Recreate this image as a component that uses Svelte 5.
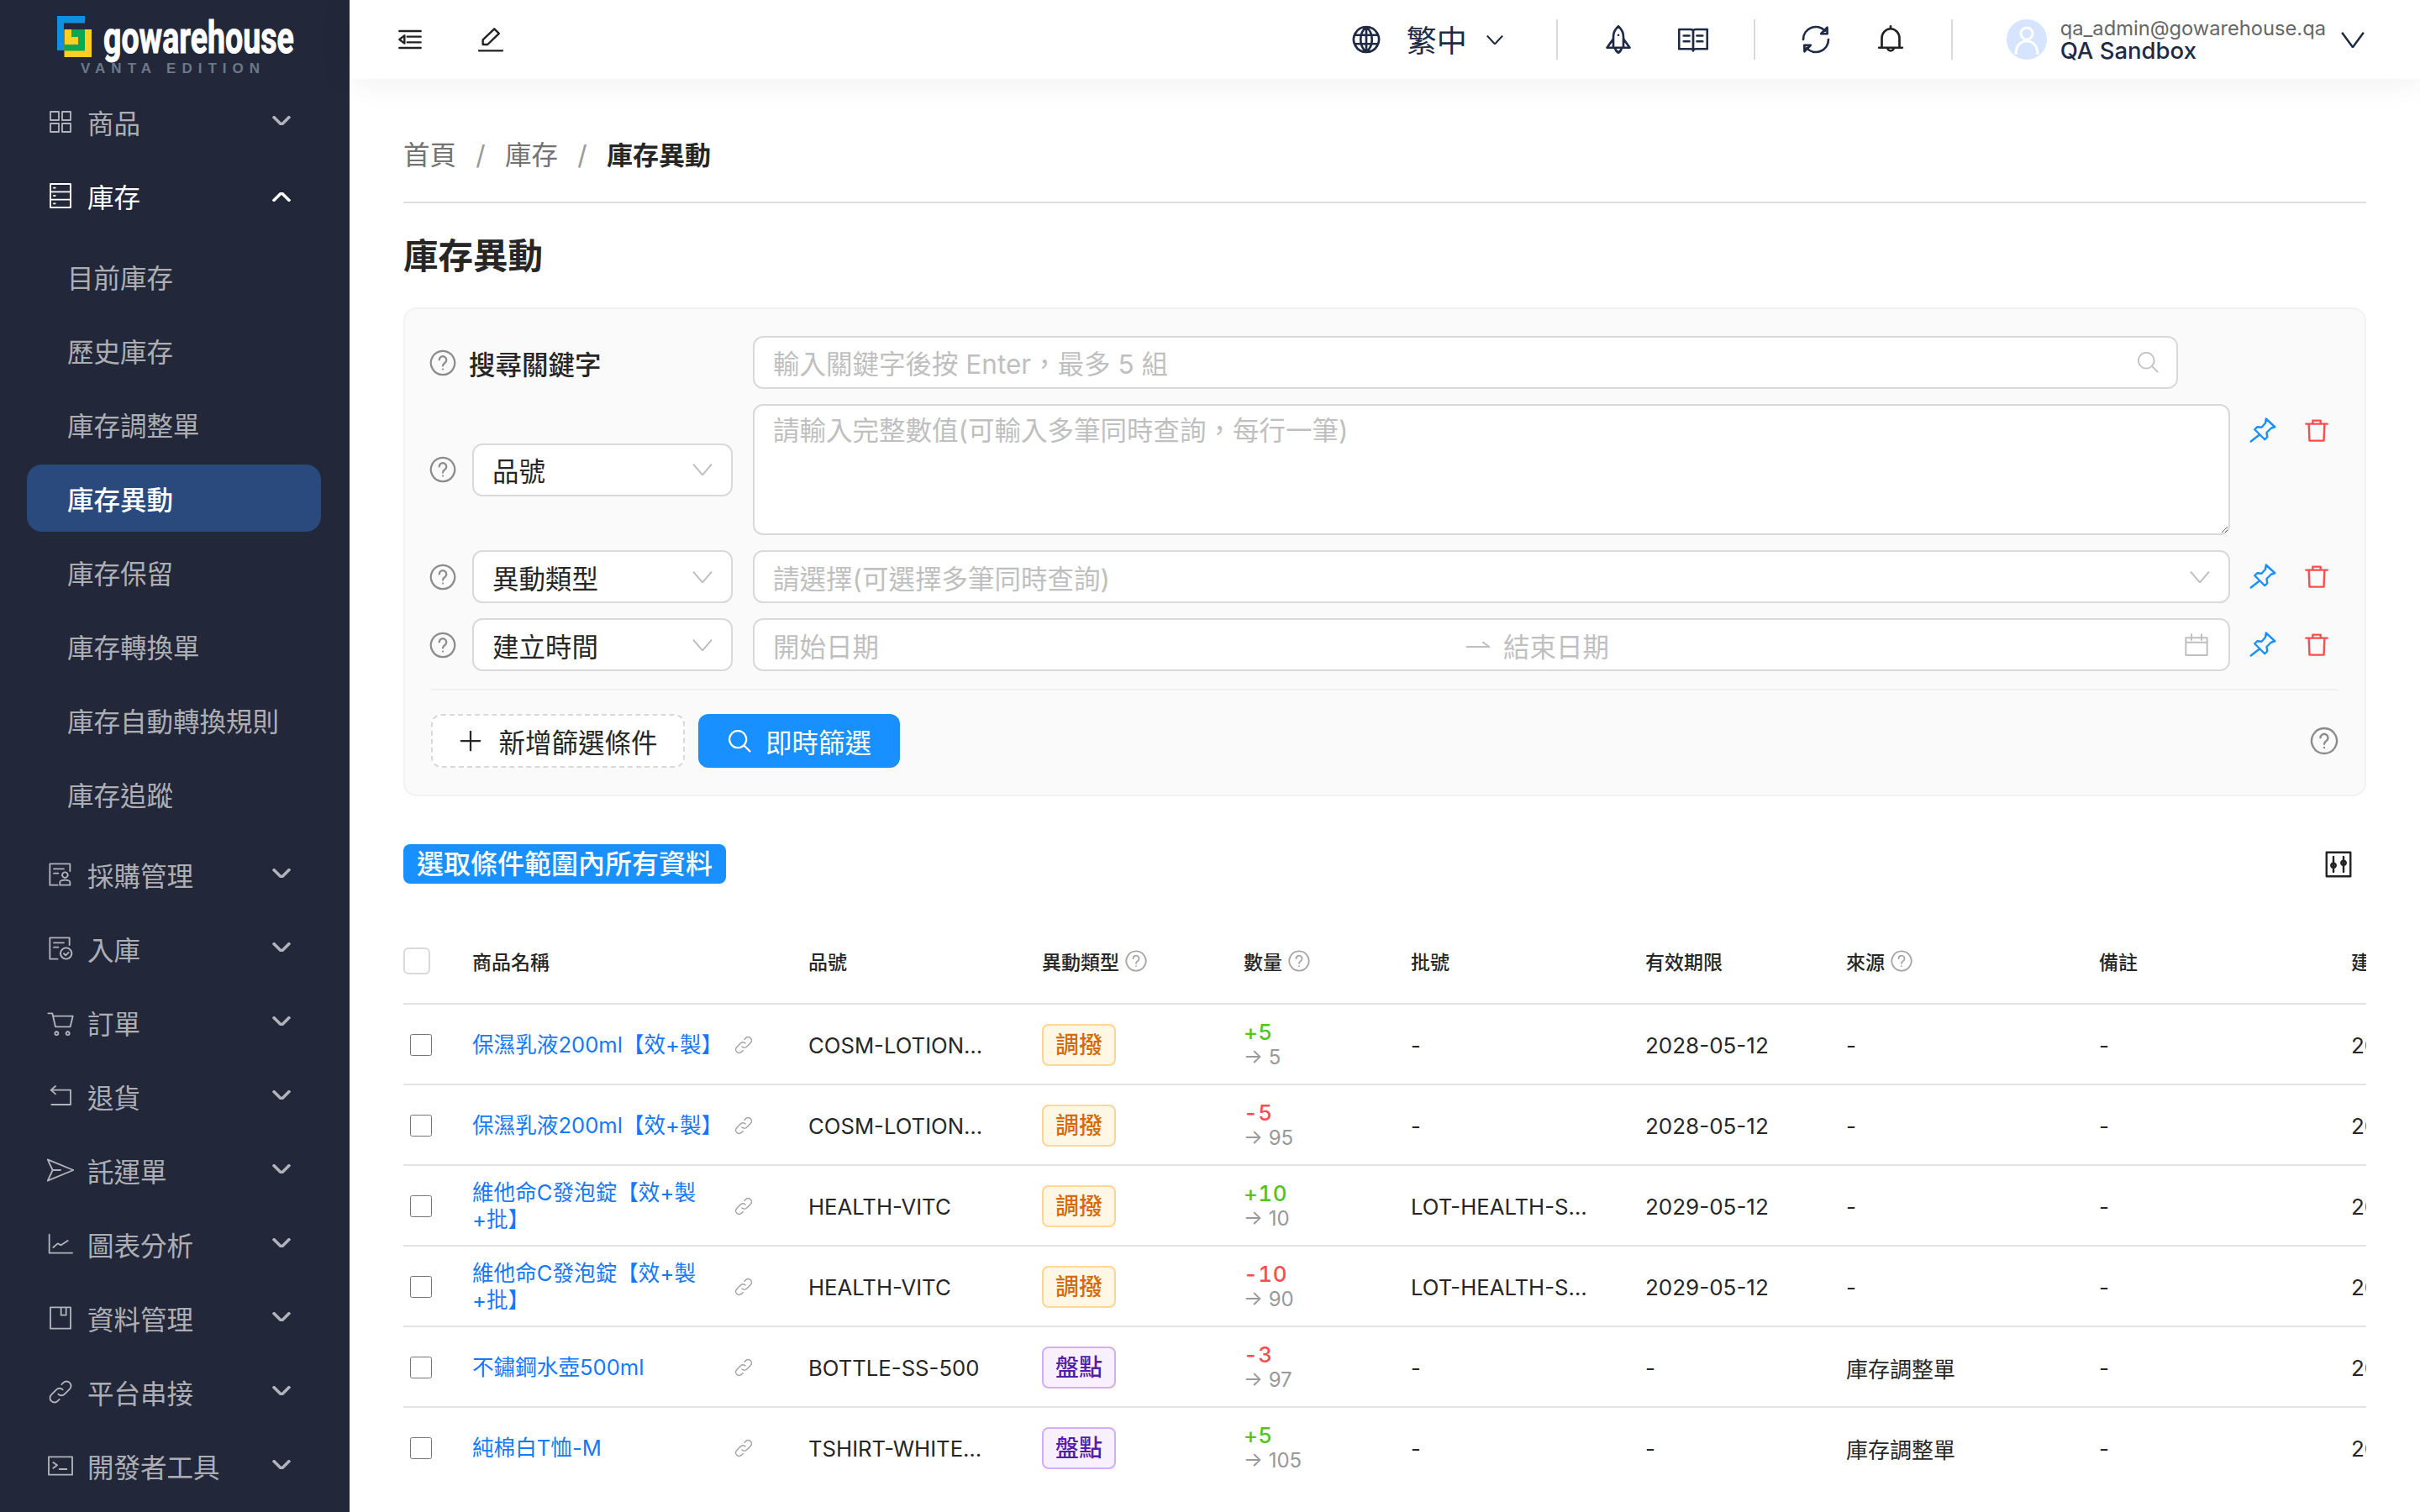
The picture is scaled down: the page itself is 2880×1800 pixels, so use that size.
<script>
    const icons = {
        grid: 'M3 3h7.500v7.500H3zM13.500 3H21v7.500h-7.500zM3 13.500h7.500V21H3zM13.500 13.500H21V21h-7.500z',
        database: 'M3 1.500h18v21H3zM3 8.500h18M3 15.500h18M6 5h1.200M6 12h1.200M6 19h1.200',
        purchase: 'M20.500 9V2.500H2.500v19h7M6 7h9M6 11h4M16 10a2.500 2.500 0 1 0 .01 0M11.500 21.500v-2.500c0-1.200 2-2 4.500-2s4.500.8 4.500 2v2.500z',
        inbound: 'M20 9V2.500H2.500v19h7M6 7h9M6 11h4M17 11.500a5 5 0 1 0 .01 0M15 16.700l1.600 1.600 2.600-2.600',
        cart: 'M1 4h3.700l2.800 12h13.200L23 6.500H5.300M8.500 20.400a1.500 1.500 0 1 0 .01 0M18.500 20.400a1.500 1.500 0 1 0 .01 0',
        back: 'M3.500 6.500H21v13H4M7.500 3L3.500 6.500 7.500 10',
        send: 'M0.500 2.500l23 9.500-23 9.500 4.500-9.500zM5 12h7',
        chart: 'M2 3.500v16.500h20.500M5.500 15l4-3.500 3 1.500 6-4',
        box: 'M3 2.500h18v19H3zM12.500 2.500v7h4.500v-7',
        link: 'M10 14a4 4 0 0 0 5.700 0l4.500-4.500a4 4 0 0 0-5.700-5.700L13 5.300M14 10a4 4 0 0 0-5.700 0l-4.500 4.500a4 4 0 0 0 5.700 5.700L11 18.700',
        terminal: 'M1.500 4h21v16h-21zM5.500 9l3.500 2.500L5.500 14M11 15h6.500',
        globe: 'M12 2a10 10 0 1 0 .01 0M12 2c-3 2.500-4.500 6-4.500 10s1.500 7.500 4.500 10c3-2.500 4.500-6 4.500-10S15 4.500 12 2zM12 2v20M2.800 8.500h18.400M2.800 15.500h18.400',
        rocket: 'M12 1.500c2.800 2.500 4 5 4 8.500v8.500H8V10c0-3.500 1.200-6 4-8.500zM8 11.500L3 18.500h18l-5-7M9.500 18.500c0 2 1.200 3.200 2.500 4 1.300-.8 2.500-2 2.500-4M12 8.500h.01',
        book: 'M0.800 4h9.200c1 0 2 .6 2 1.600 0-1 1-1.600 2-1.600h9.200v15.500H14c-1 0-2 .4-2 1.500 0-1.100-1-1.500-2-1.500H0.800zM12 5.600V21M4.500 9h4.500M4.500 13.500h4.500M15 9h4.500M15 13.500h4.500',
        sync: 'M22 12a10 10 0 0 1-17.300 6.800M2 12A10 10 0 0 1 19.300 5.200M21 2.500l.1 5-5-.1zM3 21.500l-.1-5 5 .1z',
        bell: 'M12 1.500v2M5 18.500V11c0-4 3-7.500 7-7.500s7 3.500 7 7.500v7.500M2.800 18.500h18.400M9.500 18.500a2.500 2.500 0 0 0 5 0',
        outdent: 'M2.500 4.500h19M9.500 9.500h12M9.500 14.500h12M2.500 19.500h19M7 8.500v7L2.500 12z',
        pen: 'M5 16.500v-4.200L15.200 2.500l4.200 4.200L9.200 16.500zM1.500 22h21',
        pin: 'M14.500 3L21.500 9.500 18.500 10.500 15 14 15.500 17.500 13.500 19.500 5.500 11.500 7.500 9.500 11 9.800 14 6.500zM9.500 15.500L2.500 21',
        trash: 'M2.500 6.500h19M5 6.500l.6 15h12.800l.6-15M8.500 6.500V3.500h7v3',
        calendar: 'M2.500 5.500h19v15.500h-19zM7.500 2.500v5M16.500 2.500v5M2.500 9.500h19',
        search: 'M10.500 2.500a8 8 0 1 0 .01 0M16.200 16.200L22 22',
        plus: 'M12 3v18M3 12h18',
        swap: 'M2 13.500h20l-5.500-4',
        sliders: 'M2.500 2.500h19v19h-19zM8 6v12M16 6v12M8 11a1.800 1.800 0 1 0 .01 0M16 9a1.800 1.800 0 1 0 .01 0',
        help: 'M12 2a10 10 0 1 0 .01 0M9 9.500a3 3 0 1 1 4.700 2.500c-1 .7-1.700 1.300-1.700 2.500M12 17.300h.01'
    };

    const topMenu = [
        { label: '採購管理', icon: 'purchase' },
        { label: '入庫', icon: 'inbound' },
        { label: '訂單', icon: 'cart' },
        { label: '退貨', icon: 'back' },
        { label: '託運單', icon: 'send' },
        { label: '圖表分析', icon: 'chart' },
        { label: '資料管理', icon: 'box' },
        { label: '平台串接', icon: 'link' },
        { label: '開發者工具', icon: 'terminal' }
    ];

    const stockMenu = ['目前庫存', '歷史庫存', '庫存調整單', '庫存異動', '庫存保留', '庫存轉換單', '庫存自動轉換規則', '庫存追蹤'];

    const columns = [
        { label: '' },
        { label: '商品名稱' },
        { label: '品號' },
        { label: '異動類型', help: true },
        { label: '數量', help: true },
        { label: '批號' },
        { label: '有效期限' },
        { label: '來源', help: true },
        { label: '備註' },
        { label: '建立時間' }
    ];

    const rows = [
        { name: '保濕乳液200ml【效+製】', sku: 'COSM-LOTION-200ML', type: '調撥', qty: '+5', after: 5, lot: '-', exp: '2028-05-12', source: '-' },
        { name: '保濕乳液200ml【效+製】', sku: 'COSM-LOTION-200ML', type: '調撥', qty: '-5', after: 95, lot: '-', exp: '2028-05-12', source: '-' },
        { name: '維他命C發泡錠【效+製+批】', sku: 'HEALTH-VITC', type: '調撥', qty: '+10', after: 10, lot: 'LOT-HEALTH-SEED-01', exp: '2029-05-12', source: '-' },
        { name: '維他命C發泡錠【效+製+批】', sku: 'HEALTH-VITC', type: '調撥', qty: '-10', after: 90, lot: 'LOT-HEALTH-SEED-01', exp: '2029-05-12', source: '-' },
        { name: '不鏽鋼水壺500ml', sku: 'BOTTLE-SS-500', type: '盤點', qty: '-3', after: 97, lot: '-', exp: '-', source: '庫存調整單' },
        { name: '純棉白T恤-M', sku: 'TSHIRT-WHITE-M', type: '盤點', qty: '+5', after: 105, lot: '-', exp: '-', source: '庫存調整單' }
    ];
</script>

{#snippet icon(name, cls)}
    <svg class="icon {cls}" viewBox="0 0 24 24" fill="none" stroke="currentColor" stroke-linecap="round" stroke-linejoin="round" aria-hidden="true"><path d={icons[name]} /></svg>
{/snippet}

{#snippet chevron(cls, up)}
    <svg class="chev {cls}" viewBox="0 0 24 12" preserveAspectRatio="none" fill="none" stroke="currentColor" aria-hidden="true"><path vector-effect="non-scaling-stroke" d={up ? 'M1 11.500L12 .5l11 11' : 'M1 .5l11 11L23 .5'} /></svg>
{/snippet}

{#snippet rowActions()}
    <div class="row-actions">
        {@render icon('pin', 'pin')}
        {@render icon('trash', 'trash')}
    </div>
{/snippet}

{#snippet fieldSelect(label)}
    <div class="field-left">
        {@render icon('help', 'help')}
        <div class="select">
            <span>{label}</span>
            {@render chevron('select-chev')}
        </div>
    </div>
{/snippet}

<div class="app">
    <aside class="sidebar">
        <div class="brand">
            <svg class="brand-mark" viewBox="0 0 41 49" aria-hidden="true">
                <path fill="#0e8fe0" d="M0 0H33V8.500H8V41H0Z" />
                <path fill="#ffcf25" d="M8.500 16H41V49H8.500Z" />
                <path fill="#0ca851" d="M17 16H33V41.500H8.500V34H25V25H17Z" />
            </svg>
            <div class="brand-text">
                <div class="brand-name">gowarehouse</div>
                <div class="brand-edition">VANTA EDITION</div>
            </div>
        </div>

        <nav class="menu">
            <div class="menu-item">
                {@render icon('grid', 'menu-icon')}
                <span>商品</span>
                {@render chevron('menu-chev')}
            </div>
            <div class="menu-item open">
                {@render icon('database', 'menu-icon')}
                <span>庫存</span>
                {@render chevron('menu-chev up', true)}
            </div>
            <div class="submenu">
                {#each stockMenu as item}
                    <div class="menu-item sub" class:active={item === '庫存異動'}>{item}</div>
                {/each}
            </div>
            {#each topMenu as item}
                <div class="menu-item">
                    {@render icon(item.icon, 'menu-icon')}
                    <span>{item.label}</span>
                    {@render chevron('menu-chev')}
                </div>
            {/each}
        </nav>
    </aside>

    <div class="content">
        <header class="topbar">
            <div class="tools">
                {@render icon('outdent', 'tool')}
                {@render icon('pen', 'tool')}
            </div>
            <div class="top-right">
                {@render icon('globe', 'top-icon')}
                <span class="lang">繁中</span>
                {@render chevron('lang-chev')}
                <i class="top-divider"></i>
                <div class="top-group">
                    {@render icon('rocket', 'top-icon')}
                    {@render icon('book', 'top-icon')}
                </div>
                <i class="top-divider"></i>
                <div class="top-group">
                    {@render icon('sync', 'top-icon')}
                    {@render icon('bell', 'top-icon bell')}
                </div>
                <i class="top-divider"></i>
                <div class="user">
                    <svg class="avatar" viewBox="0 0 48 48" fill="none" stroke="#fff" stroke-width="3" aria-hidden="true">
                        <circle cx="24" cy="24" r="24" fill="#d6e4ff" stroke="none" />
                        <circle cx="24" cy="17" r="7" />
                        <path d="M11 42c0-10 5-16 13-16s13 6 13 16" />
                    </svg>
                    <div class="user-text">
                        <div class="user-mail">qa_admin@gowarehouse.qa</div>
                        <div class="user-name">QA Sandbox</div>
                    </div>
                    {@render chevron('user-chev')}
                </div>
            </div>
        </header>

        <main class="page">
            <div class="crumbs">
                <span>首頁</span><span class="slash">/</span><span>庫存</span><span class="slash">/</span><span class="current">庫存異動</span>
            </div>
            <h1>庫存異動</h1>

            <section class="filters">
                <div class="filter-row">
                    <div class="field-left">
                        {@render icon('help', 'help')}
                        <span class="field-label">搜尋關鍵字</span>
                    </div>
                    <div class="keyword">
                        <input placeholder="輸入關鍵字後按 Enter，最多 5 組" readonly />
                        {@render icon('search', 'input-icon')}
                    </div>
                </div>
                <div class="filter-row">
                    {@render fieldSelect('品號')}
                    <textarea placeholder="請輸入完整數值(可輸入多筆同時查詢，每行一筆)" readonly></textarea>
                    {@render rowActions()}
                </div>
                <div class="filter-row">
                    {@render fieldSelect('異動類型')}
                    <div class="box placeholder">
                        <span>請選擇(可選擇多筆同時查詢)</span>
                        {@render chevron('select-chev')}
                    </div>
                    {@render rowActions()}
                </div>
                <div class="filter-row">
                    {@render fieldSelect('建立時間')}
                    <div class="box placeholder">
                        <span class="date">開始日期</span>
                        <span class="date-sep">{@render icon('swap', 'swap')}</span>
                        <span class="date">結束日期</span>
                        {@render icon('calendar', 'input-icon')}
                    </div>
                    {@render rowActions()}
                </div>
                <div class="filter-footer">
                    <button class="btn-add">{@render icon('plus', 'btn-icon')}新增篩選條件</button>
                    <button class="btn-search">{@render icon('search', 'btn-icon')}即時篩選</button>
                    {@render icon('help', 'help footer-help')}
                </div>
            </section>

            <div class="table-tools">
                <span class="select-all">選取條件範圍內所有資料</span>
                {@render icon('sliders', 'sliders')}
            </div>

            <div class="table-wrap">
                <div class="table-row table-head">
                    {#each columns as col, i}
                        <div class="cell">
                            {#if i === 0}
                                <span class="head-check"></span>
                            {:else}
                                {col.label}
                                {#if col.help}{@render icon('help', 'head-help')}{/if}
                            {/if}
                        </div>
                    {/each}
                </div>
                {#each rows as row}
                    <div class="table-row">
                        <div class="cell"><input class="row-check" type="checkbox" /></div>
                        <div class="cell name-cell">
                            <span class="name">{row.name}</span>
                            {@render icon('link', 'name-link')}
                        </div>
                        <div class="cell"><span class="clip">{row.sku}</span></div>
                        <div class="cell">
                            <span class="tag" class:purple={row.type === '盤點'}>{row.type}</span>
                        </div>
                        <div class="cell qty">
                            <span class:plus={row.qty[0] === '+'} class:minus={row.qty[0] === '-'}>{row.qty}</span>
                            <span class="after">→ {row.after}</span>
                        </div>
                        <div class="cell"><span class="clip">{row.lot}</span></div>
                        <div class="cell">{row.exp}</div>
                        <div class="cell">{row.source}</div>
                        <div class="cell">-</div>
                        <div class="cell">2026-03-18</div>
                    </div>
                {/each}
            </div>
        </main>
    </div>
</div>

<style>
    :global(body) {
        margin: 0;
    }

    .app {
        display: flex;
        height: 1800px;
        overflow: hidden;
        background: #fff;
        color: #262626;
        font-family: Inter, 'Noto Sans CJK TC', sans-serif;
        font-size: 31.500px;
    }

    .icon {
        flex: none;
        stroke-width: 1.6;
    }

    .chev {
        flex: none;
    }

    /* sidebar */
    .sidebar {
        flex: none;
        width: 416px;
        background: #222839;
        color: rgba(255, 255, 255, 0.65);
    }

    .brand {
        display: flex;
        align-items: flex-start;
        gap: 14px;
        height: 105px;
        padding: 19px 0 0 68px;
        box-sizing: border-box;
    }

    .brand-mark {
        flex: none;
        width: 41px;
        height: 49px;
    }

    .brand-text {
        width: 229px;
        padding-top: 2px;
    }

    .brand-name {
        font-family: Roboto, sans-serif;
        font-weight: 700;
        font-size: 54px;
        line-height: 48px;
        color: #fff;
        white-space: nowrap;
        -webkit-text-stroke: 1px #fff;
        transform: scaleX(0.695);
        transform-origin: left;
    }

    .brand-edition {
        margin: 4px 0 0 -27px;
        font-size: 17px;
        line-height: 18px;
        font-family: 'Liberation Sans', sans-serif;
        font-weight: 700;
        letter-spacing: 7px;
        color: #6d7889;
        white-space: nowrap;
    }

    .menu-item {
        display: flex;
        align-items: center;
        gap: 16px;
        height: 80px;
        margin: 0 34px 8px 32px;
        padding: 0 36px 0 24px;
        border-radius: 18px;
    }

    .menu-item > span {
        flex: 1;
    }

    .menu-item.open {
        color: #fff;
    }

    .menu-item.sub {
        padding-left: 48px;
    }

    .menu-item.active {
        background: #2a4a7d;
        color: #fff;
        font-weight: 500;
    }

    .submenu {
        margin: 16px 0 16px;
    }

    .menu-item :global(.menu-icon) {
        width: 32px;
        height: 32px;
        stroke-width: 1.400;
    }

    .menu-item :global(.menu-chev) {
        width: 22px;
        height: 11px;
        margin-top: -4px;
        stroke-width: 3.500;
    }

    .menu-item :global(.menu-chev.up) {
        margin-top: 2px;
    }

    /* topbar */
    .content {
        flex: 1;
        min-width: 0;
    }

    .topbar {
        position: relative;
        display: flex;
        align-items: center;
        height: 94px;
        padding: 0 66px 0 56px;
        background: #fff;
        box-shadow: 0 2px 40px rgba(0, 0, 0, 0.07);
    }

    .tools {
        display: flex;
        gap: 64px;
        color: #222;
    }

    .tools :global(.tool) {
        width: 32px;
        height: 32px;
        stroke-width: 1.800;
    }

    .top-right {
        display: flex;
        align-items: center;
        margin-left: auto;
        color: #1f2a44;
    }

    .top-right :global(.top-icon) {
        width: 36px;
        height: 36px;
        stroke-width: 1.800;
    }

    .top-right :global(.bell) {
        color: #222;
    }

    .lang {
        margin: -3px 0 0 30px;
        font-size: 36px;
    }

    .top-right :global(.lang-chev) {
        width: 20px;
        height: 11px;
        margin-left: 23px;
        stroke-width: 2;
    }

    .top-divider {
        width: 2px;
        height: 48px;
        background: #d9d9d9;
    }

    .top-divider:first-of-type {
        margin-left: 63px;
    }

    .top-group {
        display: flex;
        gap: 53px;
        padding: 0 54px;
    }

    .user {
        display: flex;
        align-items: center;
        padding-left: 64px;
    }

    .avatar {
        width: 48px;
        height: 48px;
    }

    .user-text {
        margin-left: 16px;
        line-height: 27px;
    }

    .user-mail {
        font-size: 23.700px;
        color: #666;
    }

    .user-name {
        font-size: 27.500px;
        font-weight: 500;
    }

    .user :global(.user-chev) {
        width: 28px;
        height: 19px;
        margin-left: 18px;
        stroke-width: 2.500;
    }

    /* page */
    .page {
        padding: 68px 64px 0;
    }

    .crumbs {
        display: flex;
        line-height: 46px;
        padding-bottom: 32px;
        border-bottom: 2px solid #dedede;
        color: #737373;
    }

    .slash {
        width: 58px;
        text-align: center;
        color: #999;
    }

    .current {
        font-size: 31px;
        font-weight: 600;
        color: #262626;
    }

    h1 {
        margin: 36px 0 34px;
        font-size: 41.500px;
        line-height: 54px;
        font-weight: 700;
        color: #262626;
    }

    /* filters */
    .filters {
        box-sizing: border-box;
        height: 582px;
        padding: 32px 32px 0 31px;
        background: #fafafa;
        border: 2px solid #f2f2f2;
        border-radius: 16px;
    }

    .filter-row {
        display: flex;
        align-items: center;
        margin-bottom: 18px;
    }

    .field-left {
        flex: none;
        display: flex;
        align-items: center;
        gap: 18px;
        width: 359px;
        margin-right: 24px;
    }

    .field-left :global(.help) {
        width: 34px;
        height: 34px;
        margin-left: -3px;
    }

    :global(.help) {
        color: #8c8c8c;
    }

    .field-label {
        margin-left: -4px;
        font-weight: 500;
    }

    .select,
    .box,
    input,
    textarea {
        box-sizing: border-box;
        height: 63px;
        background: #fff;
        border: 2px solid #d9d9d9;
        border-radius: 12px;
        font: inherit;
        color: inherit;
    }

    input::placeholder,
    textarea::placeholder {
        color: #bfbfbf;
    }

    .select {
        flex: 1;
        display: flex;
        align-items: center;
        justify-content: space-between;
        padding: 0 22px;
    }

    .select :global(.select-chev),
    .box :global(.select-chev) {
        width: 24px;
        height: 14px;
        stroke-width: 2;
        color: #bfbfbf;
    }

    .keyword {
        position: relative;
        width: 1696px;
    }

    .keyword input {
        width: 100%;
        padding: 3px 64px 0 22px;
        outline: none;
    }

    .keyword :global(.input-icon) {
        position: absolute;
        top: 17px;
        right: 22px;
        width: 28px;
        height: 28px;
    }

    .filter-row :global(.input-icon) {
        color: #bfbfbf;
        stroke-width: 1.500;
    }

    textarea {
        flex: 1;
        height: 156px;
        padding: 14px 22px;
        line-height: 32px;
        outline: none;
        resize: vertical;
    }

    .box {
        flex: 1;
        display: flex;
        align-items: center;
        justify-content: space-between;
        padding: 0 22px;
    }

    .placeholder {
        color: #bfbfbf;
    }

    .box :global(.input-icon) {
        width: 32px;
        height: 32px;
    }

    .date {
        flex: 1;
    }

    .date-sep {
        flex: none;
        display: flex;
        justify-content: center;
        width: 60px;
    }

    .date-sep :global(.swap) {
        width: 32px;
        height: 32px;
        stroke-width: 1.500;
    }

    .row-actions {
        flex: none;
        align-self: flex-start;
        display: flex;
        align-items: center;
        gap: 30px;
        margin: 13px 9px 0 21px;
    }

    .row-actions :global(.pin) {
        width: 36px;
        height: 36px;
        color: #1890ff;
        stroke-width: 1.600;
    }

    .row-actions :global(.trash) {
        width: 32px;
        height: 32px;
        color: #ff4d4f;
        stroke-width: 1.800;
    }

    .filter-footer {
        display: flex;
        align-items: center;
        gap: 16px;
        margin-top: 21px;
        padding-top: 28px;
        border-top: 2px solid #f0f0f0;
    }

    button {
        display: flex;
        align-items: center;
        justify-content: center;
        box-sizing: border-box;
        height: 64px;
        padding: 0;
        border-radius: 12px;
        font: inherit;
    }

    .btn-add {
        gap: 18px;
        width: 302px;
        background: #fff;
        border: 2px dashed #d9d9d9;
        color: #262626;
    }

    .btn-search {
        gap: 16px;
        width: 240px;
        background: #1890ff;
        border: none;
        color: #fff;
    }

    button :global(.btn-icon) {
        width: 30px;
        height: 30px;
        stroke-width: 1.800;
    }

    .filter-footer :global(.footer-help) {
        width: 36px;
        height: 36px;
        margin: 0 -2px 0 auto;
    }

    /* table */
    .table-tools {
        display: flex;
        align-items: center;
        justify-content: space-between;
        margin-top: 57px;
        padding-right: 15px;
    }

    .select-all {
        padding: 0 16px;
        height: 47px;
        line-height: 47px;
        font-size: 32px;
        border-radius: 8px;
        background: #1890ff;
        color: #fff;
        font-weight: 500;
    }

    .table-tools :global(.sliders) {
        width: 36px;
        height: 36px;
        color: #222;
        stroke-width: 1.600;
    }

    .table-wrap {
        margin-top: 41px;
        overflow: hidden;
        font-size: 26px;
        color: #262626;
    }

    .table-row {
        display: grid;
        grid-template-columns: 82px 400px 278px 240px 199px 279px 239px 301px 300px 300px;
        width: 2618px;
        height: 94px;
        border-bottom: 2px solid #e3e3e3;
    }

    .table-row:last-child {
        border-bottom: none;
    }

    .table-head {
        height: 101px;
        font-size: 23px;
        font-weight: 500;
    }

    .table-row:not(.table-head) .cell {
        padding-top: 2px;
    }

    .cell {
        display: flex;
        align-items: center;
        min-width: 0;
        white-space: nowrap;
    }

    .head-check {
        box-sizing: border-box;
        width: 32px;
        height: 32px;
        background: #fff;
        border: 2px solid #d9d9d9;
        border-radius: 6px;
    }

    .table-head :global(.head-help) {
        width: 28px;
        height: 28px;
        margin-left: 6px;
        color: #a6a6a6;
    }

    .row-check {
        width: 26px;
        height: 26px;
        margin: 0 0 0 8px;
    }

    .name-cell {
        gap: 13px;
    }

    .name {
        width: 298px;
        font-size: 25.600px;
        white-space: normal;
        line-height: 32px;
        color: #1677ff;
    }

    .name-cell :global(.name-link) {
        width: 24px;
        height: 24px;
        color: #a6a6a6;
        stroke-width: 1.600;
    }

    .clip {
        display: block;
        width: 212px;
        font-size: 25.700px;
        overflow: hidden;
        text-overflow: ellipsis;
    }

    .tag {
        box-sizing: border-box;
        height: 50px;
        padding: 0 14px;
        line-height: 46px;
        font-size: 28px;
        font-weight: 500;
        border: 2px solid #ffd591;
        border-radius: 8px;
        background: #fff7e6;
        color: #d46b08;
    }

    .tag.purple {
        border-color: #d3adf7;
        background: #f9f0ff;
        color: #531dab;
    }

    .qty {
        flex-direction: column;
        align-items: flex-start;
        justify-content: center;
        line-height: 30px;
        font-weight: 500;
        letter-spacing: 0.5px;
    }

    .plus,
    .minus {
        font-variant-numeric: tabular-nums;
    }

    .plus {
        color: #52c41a;
    }

    .minus {
        color: #ff4d4f;
    }

    .after {
        font-size: 24px;
        font-weight: 400;
        letter-spacing: 0;
        color: #999;
    }
</style>
